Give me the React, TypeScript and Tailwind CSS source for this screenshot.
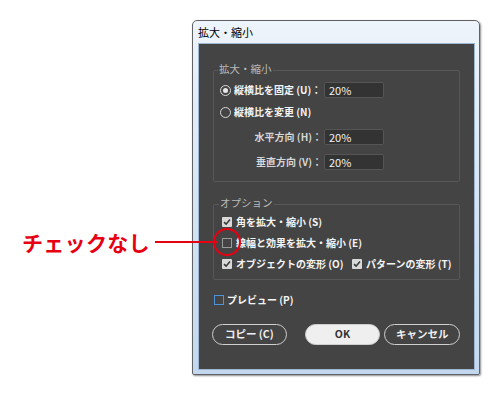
import React from "react";

function Radio({ on }: { on?: boolean }) {
  return (
    <span className="w-[11px] h-[11px] rounded-full border-[1.5px] border-[#d8d8d8] flex items-center justify-center shrink-0">
      {on && <span className="w-[5px] h-[5px] rounded-full bg-[#e8e8e8]" />}
    </span>
  );
}

function Check({ on, blue }: { on?: boolean; blue?: boolean }) {
  if (on) {
    return (
      <span className="w-[10px] h-[10px] bg-[#d9d9d9] rounded-[1px] flex items-center justify-center shrink-0">
        <svg width="8" height="8" viewBox="0 0 8 8">
          <path d="M1 4.2 L3.1 6.2 L7 1.6" fill="none" stroke="#3a3a3a" strokeWidth="1.6" />
        </svg>
      </span>
    );
  }
  return (
    <span
      className={
        blue
          ? "w-[10px] h-[10px] border border-[#4b95de] shrink-0"
          : "w-[10px] h-[10px] border border-[#9a9a9a] shrink-0"
      }
    />
  );
}

function Field({ value }: { value: string }) {
  return (
    <div className="w-[60px] h-[16px] bg-[#333333] border border-[#555555] rounded-[2px] flex items-center pl-[4px] text-[11px] text-[#f2f2f2] leading-none">
      {value}
    </div>
  );
}

export default function App() {
  return (
    <div className="relative w-[504px] h-[397px] bg-white font-['Noto_Sans_CJK_JP','Noto_Sans',sans-serif] overflow-hidden">
      <div className="pl-[192px] pt-[20px]">
        <div className="w-[288px] h-[355px] rounded-t-[5px] rounded-b-[2px] border border-[#5f6368] bg-gradient-to-b from-[#eef4fb] via-[#d6e5f5] to-[#c3d8ef] flex flex-col shadow-[1px_1px_2px_rgba(0,0,0,0.45)]">
          <div className="h-[22px] flex items-center pl-[5px] text-[11px] text-black leading-none">
            拡大・縮小
          </div>
          <div className="ml-[5px] mr-[4px] mb-[4px] flex-1 bg-[#444444] border border-[#9db7d3] px-[14px] pt-[19px] flex flex-col">
            {/* group 1 */}
            <fieldset className="border border-[#585858] rounded-[2px] p-0 m-0">
              <legend className="ml-[4px] px-[1px] text-[10.5px] leading-[14px] text-[#b9b9b9] relative -top-[1px]">
                拡大・縮小
              </legend>
              <div className="pt-[5px] pb-[11px] pl-[6px] flex flex-col">
                <div className="grid grid-cols-[102px_60px] gap-x-[2px] items-center h-[16px]">
                  <div className="flex items-center gap-[3px]">
                    <Radio on />
                    <span className="text-[10px] font-bold text-[#f4f4f4] whitespace-nowrap leading-none">
                      縦横比を固定 (U)：
                    </span>
                  </div>
                  <Field value="20%" />
                </div>
                <div className="flex items-center gap-[3px] h-[16px] mt-[6px]">
                  <Radio />
                  <span className="text-[10px] font-bold text-[#f4f4f4] whitespace-nowrap leading-none">
                    縦横比を変更 (N)
                  </span>
                </div>
                <div className="grid grid-cols-[102px_60px] gap-x-[2px] items-center h-[16px] mt-[9px]">
                  <span className="text-right text-[10px] font-bold text-[#d6d6d6] whitespace-nowrap leading-none">
                    水平方向 (H)：
                  </span>
                  <Field value="20%" />
                </div>
                <div className="grid grid-cols-[102px_60px] gap-x-[2px] items-center h-[16px] mt-[9px]">
                  <span className="text-right text-[10px] font-bold text-[#d6d6d6] whitespace-nowrap leading-none">
                    垂直方向 (V)：
                  </span>
                  <Field value="20%" />
                </div>
              </div>
            </fieldset>

            {/* group 2 */}
            <fieldset className="border border-[#585858] rounded-[2px] p-0 m-0 mt-[15px]">
              <legend className="ml-[5px] px-[1px] text-[10.5px] leading-[14px] text-[#b9b9b9] relative -top-[1px]">
                オプション
              </legend>
              <div className="pt-[4px] pb-[8px] pl-[8px] flex flex-col gap-[7px]">
                <div className="flex items-center gap-[4px] h-[14px]">
                  <Check on />
                  <span className="text-[10px] font-bold text-[#f4f4f4] whitespace-nowrap leading-none">
                    角を拡大・縮小 (S)
                  </span>
                </div>
                <div className="flex items-center gap-[4px] h-[14px]">
                  <Check />
                  <span className="text-[10px] font-bold text-[#f4f4f4] whitespace-nowrap leading-none">
                    線幅と効果を拡大・縮小 (E)
                  </span>
                </div>
                <div className="flex items-center h-[14px]">
                  <div className="flex items-center gap-[4px] w-[130px]">
                    <Check on />
                    <span className="text-[10px] font-bold text-[#f4f4f4] whitespace-nowrap leading-none">
                      オブジェクトの変形 (O)
                    </span>
                  </div>
                  <div className="flex items-center gap-[4px]">
                    <Check on />
                    <span className="text-[10px] font-bold text-[#f4f4f4] whitespace-nowrap leading-none">
                      パターンの変形 (T)
                    </span>
                  </div>
                </div>
              </div>
            </fieldset>

            <div className="flex items-center gap-[3px] h-[14px] mt-[13px] pl-[1px]">
              <Check blue />
              <span className="text-[10px] font-bold text-[#f4f4f4] whitespace-nowrap leading-none">
                プレビュー (P)
              </span>
            </div>

            <div className="flex items-center mt-[17px] -ml-[1px]">
              <button className="w-[75px] h-[21px] rounded-full border-[1.5px] border-[#cfcfcf] text-[10.5px] font-bold text-[#f0f0f0] leading-none flex items-center justify-center">
                コピー (C)
              </button>
              <button className="ml-[18px] w-[76px] h-[21px] rounded-full border-[1.5px] border-[#cfcfcf] bg-[#efefef] text-[10.5px] font-bold text-[#333333] leading-none flex items-center justify-center">
                OK
              </button>
              <button className="ml-[4px] w-[76px] h-[21px] rounded-full border-[1.5px] border-[#cfcfcf] text-[10.5px] font-bold text-[#f0f0f0] leading-none flex items-center justify-center">
                キャンセル
              </button>
            </div>
          </div>
        </div>
      </div>

      {/* annotation */}
      <div className="absolute left-[22px] top-[229px] flex items-center h-[26px]">
        <span className="text-[21px] font-bold text-[#e60012] leading-none tracking-[0.3px]">
          チェックなし
        </span>
        <span className="ml-[5px] w-[62px] h-[2px] bg-[#e60012]" />
      </div>
      <div className="absolute left-[213px] top-[228px] w-[28px] h-[28px] rounded-full border-2 border-[#e60012]" />
    </div>
  );
}
